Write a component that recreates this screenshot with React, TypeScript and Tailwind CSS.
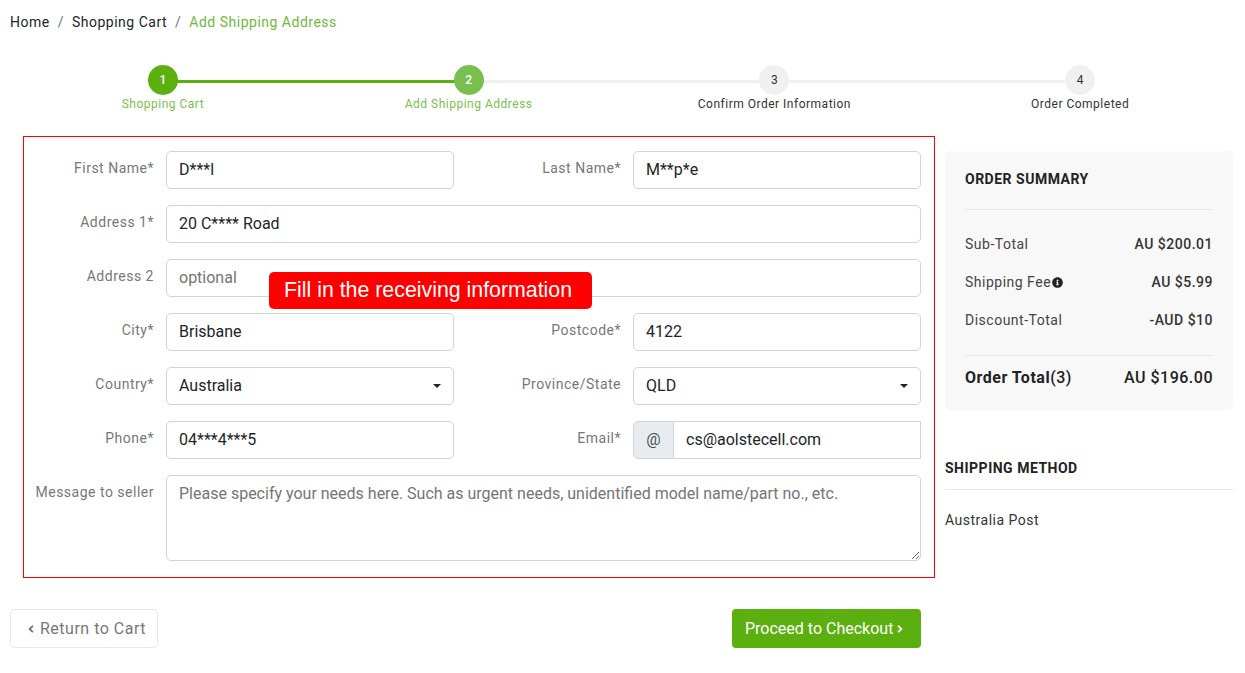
import React from 'react';
import { FaAngleLeft, FaAngleRight, FaInfoCircle } from 'react-icons/fa';

const steps = [
  { num: 1, label: 'Shopping Cart', circle: 'bg-[#5bb010] text-white font-medium', text: 'text-[#79bf50]' },
  { num: 2, label: 'Add Shipping Address', circle: 'bg-[#79bf50] text-white font-medium', text: 'text-[#79bf50]' },
  { num: 3, label: 'Confirm Order Information', circle: 'bg-[#f0f0f0] text-[#333]', text: 'text-[#333]' },
  { num: 4, label: 'Order Completed', circle: 'bg-[#f0f0f0] text-[#333]', text: 'text-[#333]' },
];

const inputClass =
  'w-full h-[38px] rounded-[5px] border border-[#ced4da] bg-white px-3 text-base text-[#212529] placeholder:text-[#757575] outline-none';

const Label = ({ children }: { children: React.ReactNode }) => (
  <label className="w-[142px] shrink-0 pt-[7px] pr-3 text-right text-sm leading-5 tracking-[0.5px] text-[#777]">
    {children}
  </label>
);

const TextField = ({ value }: { value: string }) => (
  <input className={`${inputClass} pb-[2px]`} defaultValue={value} readOnly />
);

const SelectBox = ({ value }: { value: string }) => (
  <div className="relative w-full">
    <select className={`${inputClass} appearance-none`} defaultValue={value}>
      <option>{value}</option>
    </select>
    <span className="pointer-events-none absolute right-[13px] top-[17px] h-0 w-0 border-x-[4px] border-t-[4px] border-x-transparent border-t-[#212529]" />
  </div>
);

const Row = ({ children }: { children: React.ReactNode }) => <div className="flex">{children}</div>;

const Half = ({ label, children }: { label: string; children: React.ReactNode }) => (
  <div className="flex w-[467px] last:w-[430px]">
    <Label>{label}</Label>
    <div className="w-[288px]">{children}</div>
  </div>
);

const SummaryLine = ({ label, value, info }: { label: string; value: string; info?: boolean }) => (
  <div className="flex h-[38px] items-center justify-between tracking-[0.5px] text-sm">
    <span className="flex items-center gap-px text-[#444]">
      {label}
      {info && <FaInfoCircle className="text-[11px] text-[#222]" />}
    </span>
    <span className="font-medium text-[#333]">{value}</span>
  </div>
);

const App = () => {
  return (
    <div className="min-h-[673px] bg-white px-[10px] pt-[12px] font-['Roboto',sans-serif] text-[#212529]">
      <nav className="flex h-5 items-center gap-2 text-sm leading-5 tracking-[0.5px]">
        <span>Home</span>
        <span className="text-[#6c757d]">/</span>
        <span>Shopping Cart</span>
        <span className="text-[#6c757d]">/</span>
        <span className="text-[#6fb83a]">Add Shipping Address</span>
      </nav>

      <div className="mt-[33px] grid w-[1223px] grid-cols-4">
        {steps.map((step, index) => (
          <div key={step.num} className="relative flex flex-col items-center">
            {index < 3 && (
              <div
                className={`absolute left-1/2 top-[15px] h-[3px] w-full ${
                  index === 0 ? 'bg-[#5bb010]' : 'bg-[#f0f0f0]'
                }`}
              />
            )}
            <div
              className={`relative flex h-[30px] w-[30px] items-center justify-center rounded-full text-xs ${step.circle}`}
            >
              {step.num}
            </div>
            <div className={`mt-[1px] text-xs leading-[16px] tracking-[0.5px] ${step.text}`}>{step.label}</div>
          </div>
        ))}
      </div>

      <div className="mt-[24px] flex gap-[10px]">
        <div className="w-[925px]">
          <div className="relative ml-[13px] flex w-[912px] flex-col gap-4 border border-[#f00] pb-4 pt-[14px]">
            <Row>
              <Half label="First Name*">
                <TextField value="D***l" />
              </Half>
              <Half label="Last Name*">
                <TextField value="M**p*e" />
              </Half>
            </Row>
            <Row>
              <Label>Address 1*</Label>
              <div className="w-[755px]">
                <TextField value="20 C**** Road" />
              </div>
            </Row>
            <Row>
              <Label>Address 2</Label>
              <div className="w-[755px]">
                <input className={`${inputClass} pb-[2px]`} placeholder="optional" readOnly />
              </div>
            </Row>
            <Row>
              <Half label="City*">
                <TextField value="Brisbane" />
              </Half>
              <Half label="Postcode*">
                <TextField value="4122" />
              </Half>
            </Row>
            <Row>
              <Half label="Country*">
                <SelectBox value="Australia" />
              </Half>
              <Half label="Province/State">
                <SelectBox value="QLD" />
              </Half>
            </Row>
            <Row>
              <Half label="Phone*">
                <TextField value="04***4***5" />
              </Half>
              <Half label="Email*">
                <div className="flex h-[38px]">
                  <span className="flex w-[41px] shrink-0 items-center justify-center rounded-l-[5px] border border-[#ced4da] bg-[#e9ecef] text-base text-[#495057]">
                    @
                  </span>
                  <input
                    className="min-w-0 flex-1 border border-l-0 border-[#ced4da] bg-white px-3 text-base text-[#212529] outline-none"
                    defaultValue="cs@aolstecell.com"
                    readOnly
                  />
                </div>
              </Half>
            </Row>
            <Row>
              <Label>Message to seller</Label>
              <textarea
                className="h-[86px] w-[755px] rounded-[5px] border border-[#ced4da] bg-white px-3 py-[6px] text-base leading-6 text-[#212529] placeholder:text-[#757575] outline-none"
                placeholder="Please specify your needs here. Such as urgent needs, unidentified model name/part no., etc."
                readOnly
              />
            </Row>
            <div className="absolute left-[245px] top-[135px] flex h-[37px] w-[323px] items-center rounded-[5px] bg-[#f00] pl-[15px] font-['Liberation_Sans',sans-serif] text-[21.33px] text-white">
              Fill in the receiving information
            </div>
          </div>

          <div className="ml-0 mt-[31px] flex w-[911px] justify-between">
            <button className="flex h-[39px] w-[148px] items-center gap-[5px] rounded-[4px] border border-[#e8e8e8] bg-white pl-[16px] text-base tracking-[0.5px] text-[#777]">
              <FaAngleLeft className="h-3 w-2" />
              Return to Cart
            </button>
            <button className="flex h-[39px] w-[189px] items-center gap-[3px] rounded-[4px] bg-[#5bb010] pl-[13px] text-base text-white">
              Proceed to Checkout
              <FaAngleRight className="h-3 w-2" />
            </button>
          </div>
        </div>

        <aside className="w-[288px] pt-[15px]">
          <div className="h-[259px] rounded-[5px] bg-[#f8f8f8] px-[20px] pt-[18px]">
            <h3 className="border-b border-[#e8e8e8] pb-[20px] text-sm font-bold leading-5 tracking-[0.5px] text-[#222]">
              ORDER SUMMARY
            </h3>
            <div className="border-b border-[#e8e8e8] pb-[16px] pt-[15px]">
              <SummaryLine label="Sub-Total" value="AU $200.01" />
              <SummaryLine label="Shipping Fee" value="AU $5.99" info />
              <SummaryLine label="Discount-Total" value="-AUD $10" />
            </div>
            <div className="mt-[10px] flex items-center justify-between text-base font-medium leading-6 tracking-[0.5px] text-[#222]">
              <span>
                <b className="font-bold">Order Total</b>(3)
              </span>
              <span>AU $196.00</span>
            </div>
          </div>
          <h3 className="mt-[48px] border-b border-[#e8e8e8] pb-[11px] text-sm font-bold leading-5 tracking-[0.5px] text-[#222]">
            SHIPPING METHOD
          </h3>
          <p className="mt-[20px] text-sm leading-5 tracking-[0.5px] text-[#333]">Australia Post</p>
        </aside>
      </div>
    </div>
  );
};

export default App;
